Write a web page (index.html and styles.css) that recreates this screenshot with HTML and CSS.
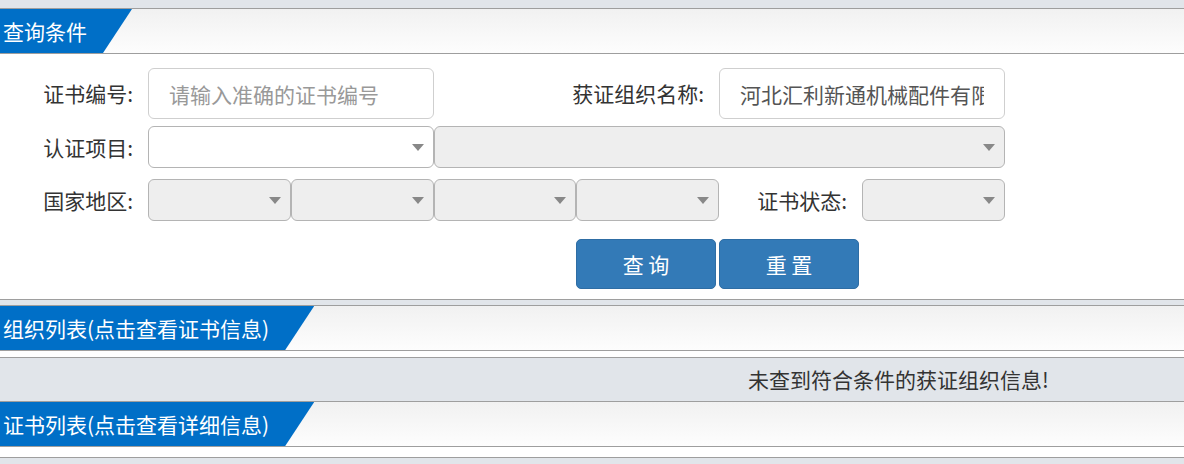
FILE: index.html
```html
<!DOCTYPE html>
<html lang="zh-CN">
<head>
    <meta charset="UTF-8">
    <meta name="viewport" content="width=device-width, initial-scale=1.0">
    <title>证书查询</title>
    <link rel="stylesheet" href="styles.css">
</head>
<body>
    <div class="page">
        <section class="panel">
            <div class="panel-head"><span class="tab">查询条件</span></div>
            <form class="search-form">
                <div class="form-row row-1">
                    <label class="label" for="cert-no">证书编号:</label>
                    <input class="field span-2" type="text" id="cert-no" placeholder="请输入准确的证书编号">
                    <label class="label span-2" for="org-name">获证组织名称:</label>
                    <input class="field span-2" type="text" id="org-name" value="河北汇利新通机械配件有限公司">
                </div>
                <div class="form-row row-2">
                    <label class="label">认证项目:</label>
                    <span class="select span-2"><select class="white"></select></span>
                    <span class="select span-4"><select></select></span>
                </div>
                <div class="form-row row-3">
                    <label class="label">国家地区:</label>
                    <span class="select"><select></select></span>
                    <span class="select"><select></select></span>
                    <span class="select"><select></select></span>
                    <span class="select"><select></select></span>
                    <label class="label">证书状态:</label>
                    <span class="select"><select></select></span>
                </div>
                <div class="form-row row-4">
                    <button type="submit" class="btn col-5">查 询</button>
                    <button type="reset" class="btn">重 置</button>
                </div>
            </form>
        </section>

        <section class="panel open">
            <div class="panel-head"><span class="tab">组织列表(点击查看证书信息)</span></div>
            <div class="list-body">
                <div class="empty-row">未查到符合条件的获证组织信息!</div>
            </div>
        </section>

        <section class="panel flush">
            <div class="panel-head"><span class="tab">证书列表(点击查看详细信息)</span></div>
            <div class="cert-body"></div>
        </section>
    </div>
</body>
</html>
```

FILE: styles.css
```css
* {
    box-sizing: border-box;
}
body {
    margin: 0;
    font-family: "Noto Sans CJK SC", "Liberation Sans", sans-serif;
    font-size: 21px;
    color: #333;
    background-color: #e1e5ea;
}
.page {
    padding-top: 8px;
}
.panel {
    background-color: #fff;
    border-top: 1px solid #9e9e9e;
    border-bottom: 1px solid #9e9e9e;
    margin-bottom: 5px;
}
.panel.open {
    border-bottom: none;
    margin-bottom: 0;
}
.panel.flush {
    margin-bottom: 0;
}
.panel-head {
    height: 45px;
    border-bottom: 1px solid #9e9e9e;
    background: linear-gradient(to bottom, #f1f1f1, #fdfdfd);
}
.tab {
    display: inline-block;
    height: 44px;
    line-height: 44px;
    padding: 0 45px 0 3px;
    color: #fff;
    background-color: #006fc7;
    clip-path: polygon(0 0, 100% 0, calc(100% - 29px) 100%, 0 100%);
}

/* search form */
.search-form {
    padding: 14px 0 10px 5px;
}
.form-row {
    display: grid;
    grid-template-columns: 143px 143px 143px 142px 143px 143px 143px;
    align-items: center;
}
.row-1 {
    height: 51px;
}
.row-2 {
    height: 42px;
    margin-top: 7px;
}
.row-3 {
    height: 42px;
    margin-top: 11px;
}
.row-4 {
    height: 50px;
    margin-top: 18px;
}
.span-2 {
    grid-column: span 2;
}
.span-4 {
    grid-column: span 4;
}
.col-5 {
    grid-column: 5;
}
.label {
    text-align: right;
    padding-right: 15px;
    line-height: 1;
}
.field {
    height: 51px;
    width: 100%;
    padding: 0 20px;
    border: 1px solid #cfcfcf;
    border-radius: 6px;
    font-family: inherit;
    font-size: 21px;
    color: #555;
    background-color: #fff;
    outline: none;
}
.field::placeholder {
    color: #999;
}
.select {
    position: relative;
    height: 42px;
    display: block;
}
.select select {
    display: block;
    width: 100%;
    height: 42px;
    border: 1px solid #b4b4b4;
    border-radius: 6px;
    background-color: #eeeeee;
    appearance: none;
    -webkit-appearance: none;
    outline: none;
}
.select select.white {
    background-color: #fff;
}
.select::after {
    content: "";
    position: absolute;
    right: 10px;
    top: 18px;
    border-left: 6px solid transparent;
    border-right: 6px solid transparent;
    border-top: 7px solid #888;
    pointer-events: none;
}
.btn {
    width: 140px;
    height: 50px;
    padding: 0;
    border: 1px solid #2e6da4;
    border-radius: 5px;
    background-color: #337ab7;
    color: #fff;
    font-family: inherit;
    font-size: 21px;
    cursor: pointer;
}

/* result lists */
.list-body {
    padding-top: 6px;
}
.empty-row {
    height: 44px;
    line-height: 43px;
    padding-left: 748px;
    border-top: 1px solid #9e9e9e;
    background-color: #e1e5ea;
}
.cert-body {
    height: 10px;
}
```
